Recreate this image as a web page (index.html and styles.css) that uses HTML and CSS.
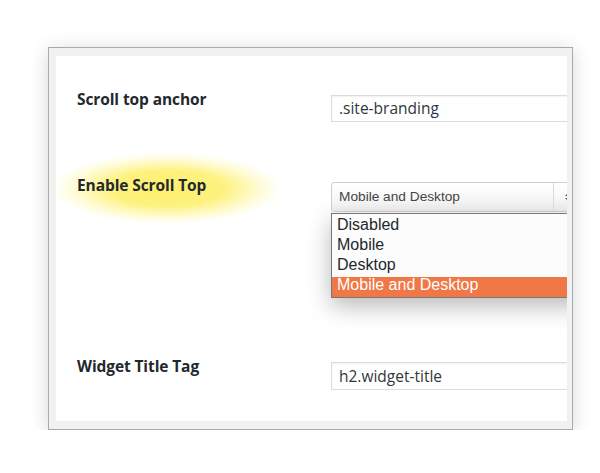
FILE: index.html
```html
<!DOCTYPE html>
<html>
<head>
<meta charset="utf-8">
<link rel="stylesheet" href="styles.css">
</head>
<body>
<div class="frame">
  <div class="panel">
    <div class="row r1">
      <div class="label">Scroll top anchor</div>
      <div class="field"><div class="input">.site-branding</div></div>
    </div>
    <div class="row r2">
      <div class="label"><span class="glow">Enable Scroll Top</span></div>
      <div class="field">
        <div class="select">
          <span class="sel-text">Mobile and Desktop</span>
          <span class="sel-arrow">
            <svg width="6" height="10" viewBox="0 0 6 10"><path d="M0 4 L3 1 L6 4 Z M0 6 L3 9 L6 6 Z" fill="#555"/></svg>
          </span>
        </div>
        <ul class="list">
          <li>Disabled</li>
          <li>Mobile</li>
          <li>Desktop</li>
          <li class="active">Mobile and Desktop</li>
        </ul>
      </div>
    </div>
    <div class="row r3">
      <div class="label">Widget Title Tag</div>
      <div class="field"><div class="input">h2.widget-title</div></div>
    </div>
  </div>
</div>
</body>
</html>
```

FILE: styles.css
```css
html, body {
  margin: 0;
  padding: 0;
  background: #ffffff;
}

.frame {
  margin: 47px 0 0 48px;
  width: 511px;
  height: 365px;
  border: 1px solid #a9a9a9;
  padding: 8px 5px 8px 7px;
  background: #f1f1f1;
  box-shadow: 0 3px 18px rgba(0, 0, 0, 0.16);
}

.panel {
  background: #ffffff;
  height: 365px;
  overflow: hidden;
  padding-left: 21px;
  box-sizing: border-box;
}

.row {
  display: flex;
  align-items: flex-start;
}

.r1 { padding-top: 33px; }
.r2 { padding-top: 53px; }
.r3 { padding-top: 58px; }

.label {
  width: 254px;
  flex: none;
  font-family: "Open Sans", sans-serif;
  font-weight: 700;
  font-size: 15.5px;
  line-height: 20px;
  letter-spacing: -0.1px;
  color: #23282d;
}

.glow {
  display: inline-block;
  padding: 22px 76px 32px 24px;
  margin: -22px -76px -32px -24px;
  background: radial-gradient(ellipse closest-side at 50% 48%,
    rgba(253, 238, 100, 0.95) 0%,
    rgba(253, 240, 110, 0.88) 50%,
    rgba(255, 246, 150, 0.4) 80%,
    rgba(255, 255, 255, 0) 100%);
}

.field {
  flex: 1;
  min-width: 0;
  padding-top: 6px;
}

.r2 .field { padding-top: 7px; }

.input {
  width: 280px;
  height: 27px;
  box-sizing: border-box;
  border: 1px solid #dcdcdc;
  box-shadow: inset 0 1px 2px rgba(0, 0, 0, 0.06);
  padding-left: 7px;
  font-family: "Open Sans", sans-serif;
  font-size: 15.5px;
  line-height: 25px;
  color: #32373c;
}

.r3 .input { height: 28px; line-height: 26px; }

.select {
  width: 280px;
  height: 30px;
  box-sizing: border-box;
  border: 1px solid #d0d0d0;
  border-radius: 3px;
  background: linear-gradient(#ffffff, #f1f1f1);
  display: flex;
  align-items: stretch;
  font-family: "Liberation Sans", Arial, sans-serif;
  font-size: 13.7px;
  color: #444;
}

.sel-text {
  width: 221px;
  flex: none;
  padding-left: 7px;
  box-sizing: border-box;
  line-height: 28px;
}

.sel-arrow {
  flex: 1;
  border-left: 1px solid #dadada;
  padding-left: 11px;
  display: flex;
  align-items: center;
}

.list {
  list-style: none;
  margin: 1px 0 0 0;
  padding: 3px 0 0 0;
  width: 280px;
  border: 1px solid #777;
  background: #fcfcfc;
  box-shadow: 0 8px 22px rgba(0, 0, 0, 0.28);
  font-family: "Liberation Sans", Arial, sans-serif;
  font-size: 16px;
  color: #23282d;
}

.list li {
  height: 20px;
  line-height: 16px;
  padding-left: 5px;
}

.list li.active {
  background: #f07746;
  color: #ffffff;
}
```
